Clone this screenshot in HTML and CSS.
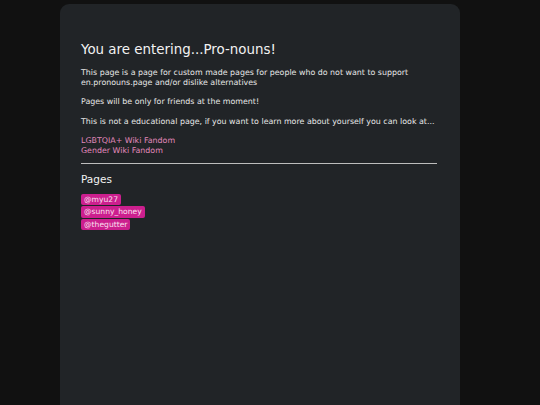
FILE: index.html
```html
<!DOCTYPE html>
<html>
<head>
<meta charset="utf-8">
<link rel="stylesheet" href="styles.css">
</head>
<body>
<main class="card">
  <h1 class="title">You are entering...Pro-nouns!</h1>
  <p class="text">This page is a page for custom made pages for people who do not want to support en.pronouns.page and/or dislike alternatives</p>
  <p class="text">Pages will be only for friends at the moment!</p>
  <p class="text">This is not a educational page, if you want to learn more about yourself you can look at...</p>
  <div class="links">
    <a class="link" href="#">LGBTQIA+ Wiki Fandom</a>
    <a class="link" href="#">Gender Wiki Fandom</a>
  </div>
  <hr class="divider">
  <h2 class="subtitle">Pages</h2>
  <div class="badges">
    <span class="badge">@myu27</span>
    <span class="badge">@sunny_honey</span>
    <span class="badge">@thegutter</span>
  </div>
</main>
</body>
</html>
```
FILE: styles.css
```css
html, body {
  margin: 0;
  padding: 0;
  background: #111111;
  height: 100%;
}
body {
  font-family: "DejaVu Sans", sans-serif;
  color: #e6e6e6;
  overflow: hidden;
}
.card {
  margin: 4px 0 0 60px;
  width: 400px;
  min-height: 420px;
  box-sizing: border-box;
  background: #212427;
  border-radius: 9px;
  padding: 37px 23px 0 21px;
}
.title {
  margin: 0;
  font-size: 13.4px;
  font-weight: normal;
  color: #f2f2f2;
  line-height: 18px;
}
.text {
  margin: 9px 0 0 0;
  font-size: 7.9px;
  line-height: 9.6px;
}
.text + .text {
  margin-top: 10px;
}
.links {
  margin-top: 10px;
  display: flex;
  flex-direction: column;
}
.link {
  color: #e088bb;
  text-decoration: none;
  font-size: 7.9px;
  line-height: 9.6px;
}
.divider {
  margin: 7px 0 0 0;
  border: 0;
  height: 1px;
  background: #bdbdbd;
}
.subtitle {
  margin: 8px 0 0 0;
  font-size: 10.5px;
  font-weight: normal;
  line-height: 14px;
  color: #f2f2f2;
}
.badges {
  margin-top: 8px;
  display: flex;
  flex-direction: column;
  align-items: flex-start;
  gap: 1px;
}
.badge {
  background: #cc1f8e;
  color: #fbe0f0;
  font-size: 7.6px;
  line-height: 11.5px;
  padding: 0 3px;
  border-radius: 2px;
}
```
